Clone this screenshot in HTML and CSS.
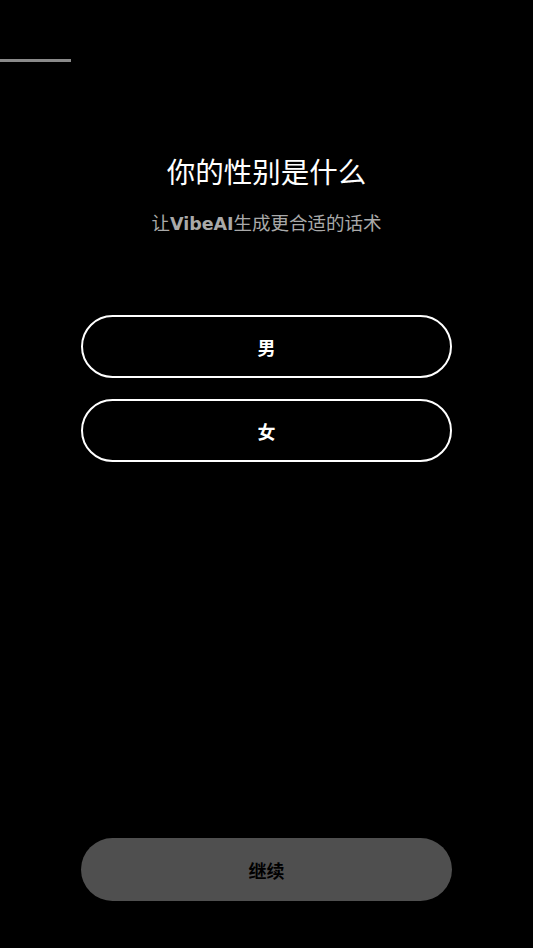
FILE: index.html
```html
<!DOCTYPE html>
<html lang="zh-CN">
<head>
<meta charset="utf-8">
<title>性别</title>
<link rel="stylesheet" href="styles.css">
</head>
<body>
<div class="screen">
  <div class="progress"><div class="progress-fill"></div></div>
  <h1 class="title">你的性别是什么</h1>
  <p class="subtitle">让<span class="brand">VibeAI</span>生成更合适的话术</p>
  <div class="options">
    <button class="option">男</button>
    <button class="option">女</button>
  </div>
  <div class="spacer"></div>
  <button class="continue">继续</button>
</div>
</body>
</html>
```

FILE: styles.css
```css
html, body {
  margin: 0;
  padding: 0;
  background: #000;
}
body {
  font-family: "Noto Sans CJK SC", "Noto Sans", sans-serif;
  color: #fff;
}
.screen {
  width: 533px;
  height: 948px;
  display: flex;
  flex-direction: column;
  align-items: center;
  box-sizing: border-box;
  padding-top: 59px;
  padding-bottom: 47px;
}
.progress {
  align-self: stretch;
  height: 3px;
}
.progress-fill {
  width: 71px;
  height: 3px;
  background: #8a8a8a;
}
.title {
  margin: 89px 0 0;
  font-size: 28.5px;
  font-weight: 400;
  line-height: 40px;
  color: #fff;
}
.subtitle {
  margin: 19px 0 0;
  font-size: 18.5px;
  line-height: 24px;
  color: #a9a9a9;
}
.brand {
  font-family: "DejaVu Sans", sans-serif;
  font-weight: 700;
  font-size: 17.5px;
}
.options {
  margin-top: 79px;
  display: flex;
  flex-direction: column;
  gap: 21px;
}
.option {
  width: 371px;
  height: 63px;
  border: 2px solid #fff;
  border-radius: 32px;
  background: #000;
  color: #fff;
  font-family: "Noto Sans CJK SC", sans-serif;
  font-size: 18px;
  font-weight: 700;
  padding: 0;
}
.spacer {
  flex: 1;
}
.continue {
  width: 371px;
  height: 63px;
  border: none;
  border-radius: 32px;
  background: #4f4f4f;
  color: #000;
  font-family: "Noto Sans CJK SC", sans-serif;
  font-size: 18px;
  font-weight: 700;
  padding: 0;
}
```
